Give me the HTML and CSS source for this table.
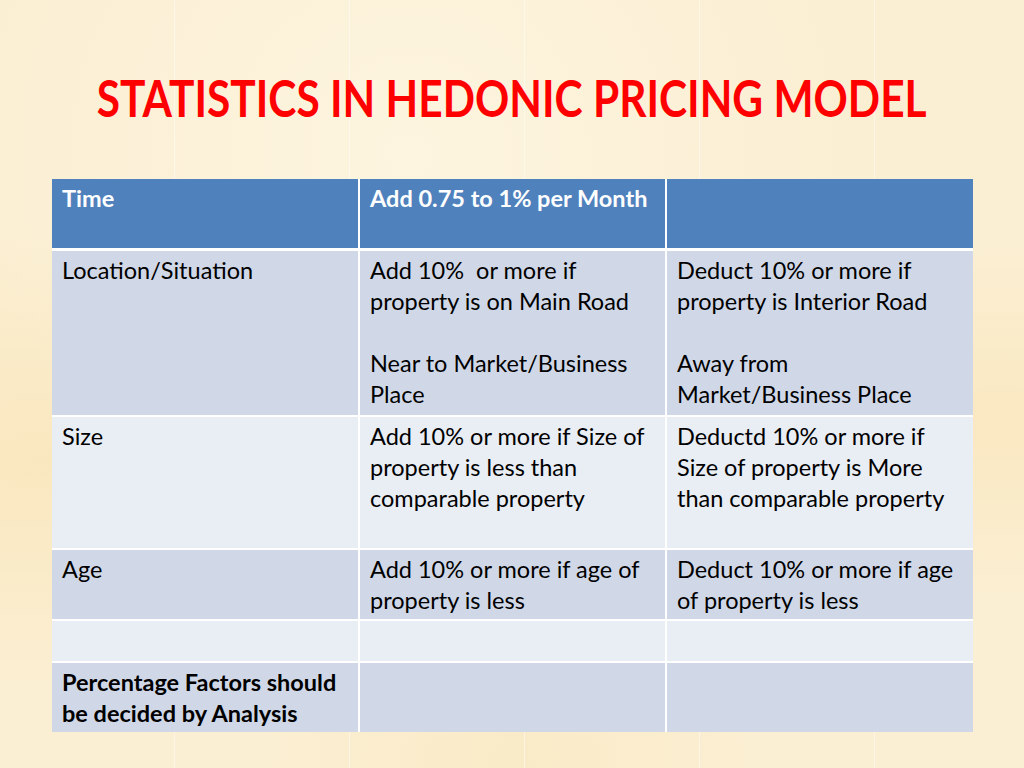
FILE: index.html
```html
<!DOCTYPE html>
<html lang="en">
<head>
<meta charset="utf-8">
<title>Statistics in Hedonic Pricing Model</title>
<link rel="stylesheet" href="styles.css">
</head>
<body>
<main class="slide">
  <h1 class="title">STATISTICS IN HEDONIC PRICING MODEL</h1>
  <table class="grid">
    <colgroup>
      <col class="c1"><col class="c2"><col class="c3">
    </colgroup>
    <thead>
      <tr class="head">
        <th>Time</th>
        <th>Add 0.75 to 1% per Month</th>
        <th></th>
      </tr>
    </thead>
    <tbody>
      <tr class="r-loc dark">
        <td>Location/Situation</td>
        <td>Add 10%&nbsp; or more if<br>property is on Main Road<br><br>Near to Market/Business<br>Place</td>
        <td>Deduct 10% or more if<br>property is Interior Road<br><br>Away from<br>Market/Business Place</td>
      </tr>
      <tr class="r-size light">
        <td>Size</td>
        <td>Add 10% or more if Size of<br>property is less than<br>comparable property</td>
        <td>Deductd 10% or more if<br>Size of property is More<br>than comparable property</td>
      </tr>
      <tr class="r-age dark">
        <td>Age</td>
        <td>Add 10% or more if age of<br>property is less</td>
        <td>Deduct 10% or more if age<br>of property is less</td>
      </tr>
      <tr class="r-empty light">
        <td></td><td></td><td></td>
      </tr>
      <tr class="r-note dark">
        <td class="strong">Percentage Factors should<br>be decided by Analysis</td>
        <td></td><td></td>
      </tr>
    </tbody>
  </table>
</main>
</body>
</html>
```

FILE: styles.css
```css
html, body {
  margin: 0;
  padding: 0;
}

body {
  width: 1024px;
  height: 768px;
  overflow: hidden;
  font-family: Lato, "Liberation Sans", sans-serif;
  background-color: #fbefd3;
  background-image:
    repeating-linear-gradient(90deg, transparent 0, transparent 174px, rgba(255,255,255,0.45) 174px, rgba(255,255,255,0.45) 175px),
    radial-gradient(ellipse at 4% 60%, rgba(247,222,165,0.45), transparent 35%),
    radial-gradient(ellipse at 98% 55%, rgba(247,222,165,0.4), transparent 30%),
    radial-gradient(ellipse at 50% 100%, rgba(247,225,172,0.3), transparent 35%),
    radial-gradient(ellipse at 40% 20%, rgba(255,250,235,0.5), transparent 50%);
}

.slide {
  display: flex;
  flex-direction: column;
  align-items: center;
  padding-top: 70px;
}

.title {
  margin: 0;
  height: 109px;
  color: #ff0000;
  font-family: Lato, "Liberation Sans", sans-serif;
  font-weight: 700;
  font-size: 51px;
  line-height: 56px;
  white-space: nowrap;
  text-align: center;
  transform: scaleX(0.832);
}

.grid {
  width: 921px;
  margin-left: 1px;
  border-collapse: collapse;
  table-layout: fixed;
  font-size: 23.5px;
  line-height: 31px;
  color: #000;
}

.c1 { width: 307px; }
.c2 { width: 307px; }
.c3 { width: 307px; }

.grid th,
.grid td {
  padding: 4px 10px 5px;
  text-align: left;
  vertical-align: top;
  border: 2px solid #ffffff;
  border-top: 0;
}

.grid tr > :first-child { border-left: 0; }
.grid tr > :last-child { border-right: 0; }
.grid tbody tr:last-child td { border-bottom: 0; }

.head th {
  height: 60px;
  padding-top: 4px;
  background: #4f81bd;
  color: #fff;
  font-weight: 700;
  border-bottom: 3px solid #ffffff;
}

.dark td { background: #d0d8e8; }
.light td { background: #e9edf4; }

.r-loc td { height: 152px; }
.r-size td { height: 122px; }
.r-age td { height: 62px; padding-bottom: 3px; }
.r-empty td { height: 31px; }
.r-note td { height: 62px; padding-bottom: 3px; }

.strong { font-weight: 700; }
```
